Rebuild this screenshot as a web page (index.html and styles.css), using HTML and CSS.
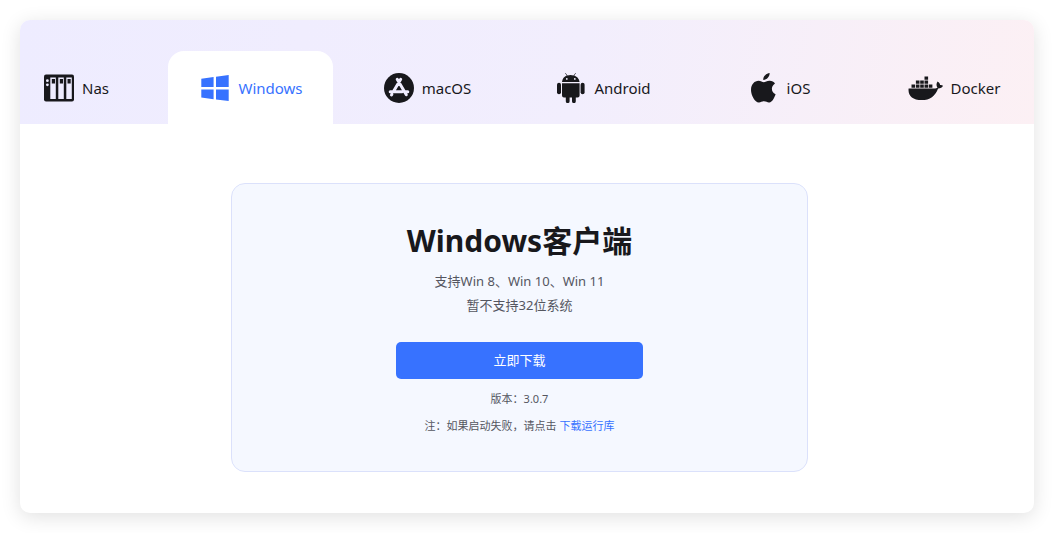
FILE: index.html
```html
<!DOCTYPE html>
<html lang="zh-CN">
<head>
<meta charset="utf-8">
<meta name="viewport" content="width=device-width, initial-scale=1">
<title>Windows客户端</title>
<link rel="stylesheet" href="styles.css">
</head>
<body>
<main class="panel">
  <nav class="tabs" role="tablist" aria-label="客户端">
    <button class="tab tab-first" type="button" role="tab">
      <svg class="icon" viewBox="0 0 30 30" aria-hidden="true">
        <rect x="0" y="1.5" width="30" height="27" rx="2" fill="#18181c"/>
        <g fill="#eeecff"><circle cx="3.4" cy="7.7" r="1.4"/><circle cx="3.4" cy="11.8" r="1.4"/>
        <path d="M6.3 4.5h5.5v21.5H6.3zM14.3 4.5h5.5v21.5h-5.5zM22.3 4.5h5.5v21.5h-5.5z"/></g>
        <path d="M7.8 6h3.2v4.6H7.8zM15.8 6H19v4.600h-3.200zM23.500 6h3.200v4.600h-3.200z" fill="#18181c"/>
      </svg>
      <span>Nas</span>
    </button>
    <button class="tab tab-active" type="button" role="tab" aria-selected="true">
      <svg class="icon" viewBox="0 0 30 30" aria-hidden="true">
        <path fill="currentColor" d="M1.300 5.700 13.600 4v10H1.300zM16 3.700 28.700 2v12H16zM1.300 16.400h12.300v9.900L1.300 24.600zM16 16.400h12.700V28L16 26.400z"/>
      </svg>
      <span>Windows</span>
    </button>
    <button class="tab" type="button" role="tab">
      <svg class="icon" viewBox="0 0 30 30" aria-hidden="true">
        <circle cx="15" cy="15" r="15" fill="#18181c"/>
        <path d="M13.200 6.200 22.300 21.800M16.700 6.200 9.600 18.300M6.200 18.800H18M21.300 18.800h2.500M7.900 21.300l-.4.700" fill="none" stroke="#f0edff" stroke-width="3" stroke-linecap="round"/>
      </svg>
      <span>macOS</span>
    </button>
    <button class="tab" type="button" role="tab">
      <svg class="icon" viewBox="0 0 30 30" aria-hidden="true">
        <g fill="#18181c"><path d="M6 9C6.300 5.700 8.300 3.600 10.800 2.600L9 .3l.5-.3 2 2.400a11 11 0 0 1 6 0L19.500 0l.5.3-1.800 2.300C20.700 3.600 23.300 5.700 23.600 9z"/>
        <path d="M6 10.200h17.600v12.300a2 2 0 0 1-2 2h-1.800v3.700a1.900 1.900 0 0 1-3.800 0v-3.700h-2.400v3.700a1.900 1.900 0 0 1-3.800 0v-3.700H8a2 2 0 0 1-2-2z"/>
        <rect x="1" y="9.800" width="4" height="11.500" rx="2"/><rect x="24.600" y="9.800" width="4" height="11.500" rx="2"/></g>
        <circle cx="10.800" cy="5.900" r=".9" fill="#f2eefd"/><circle cx="18.800" cy="5.900" r=".9" fill="#f2eefd"/>
      </svg>
      <span>Android</span>
    </button>
    <button class="tab" type="button" role="tab">
      <svg class="icon" viewBox="0 0 30 30" aria-hidden="true">
        <path fill="#18181c" d="M20.600 0c.3 3-2.600 7-6.300 6.900C13.900 3.600 17.200.4 20.600 0zM26 10.400c-4.500 2.900-4 8.800.6 10.800-1.100 3.200-3.400 8-6.300 8.300-2 .2-3-1.200-5.300-1.200s-3.300 1.300-5.200 1.200C6 29.300 2 22.500 2 17c0-6 3.800-9.100 7.500-9.200 2.200 0 4 1.500 5.300 1.500s3.500-1.700 6-1.500c2.200.1 4 1 5.200 2.600z"/>
      </svg>
      <span>iOS</span>
    </button>
    <button class="tab" type="button" role="tab">
      <svg class="icon icon-wide" viewBox="0 0 35 30" aria-hidden="true">
        <path fill="#18181c" d="M.6 15.400h25.600c1.500 0 2.600-.4 3.300-1-1.400-1.700-1.300-4 .1-5.800 1.500.9 2.400 2.200 2.500 3.500 1-.2 2.100 0 2.900.6-.8 1.700-2.400 2.700-4.900 2.700C27.200 23.200 22 27 13.700 27 4.500 27-.2 22.500.6 15.400z"/>
        <path fill="#18181c" d="M3.500 11.400h3.600v3.300H3.500zM7.900 11.400h3.600v3.300H7.900zM12.200 11.400h3.600v3.300h-3.600zM16.500 11.400h3.600v3.300h-3.600zM20.800 11.400h3.600v3.300h-3.600zM7.900 7.400h3.600v3.300H7.900zM12.200 7.400h3.600v3.300h-3.600zM16.500 7.400h3.600v3.300h-3.600zM16.500 3.400h3.600v3.300h-3.600z"/>
      </svg>
      <span>Docker</span>
    </button>
  </nav>
  <section class="content">
    <div class="card">
      <h1 class="title">Windows客户端</h1>
      <p class="support">支持Win 8、Win 10、Win 11<br>暂不支持32位系统</p>
      <button class="download" type="button">立即下载</button>
      <p class="note">版本：3.0.7</p>
      <p class="note">注：如果启动失败，请点击 <a class="link" href="#">下载运行库</a></p>
    </div>
  </section>
</main>
</body>
</html>
```
FILE: styles.css
```css
* {
  box-sizing: border-box;
}

body {
  margin: 0;
  padding: 20px;
  background: #fff;
  color: #18181c;
  font-family: "Noto Sans", "Noto Sans CJK SC", sans-serif;
}

.panel {
  overflow: hidden;
  border-radius: 10px;
  box-shadow: 0 4px 20px rgba(0, 0, 0, 0.12);
  background: #fff;
}

.tabs {
  display: grid;
  grid-template-columns: 137fr repeat(4, 165fr) 162fr;
  column-gap: 11px;
  padding-top: 31px;
  background: linear-gradient(100deg, #eeecff 0%, #f2eefd 55%, #fcf0f4 100%);
}

.tab {
  display: flex;
  align-items: center;
  justify-content: center;
  gap: 8px;
  height: 73px;
  padding: 0 0 0 2px;
  border: 0;
  border-radius: 16px 16px 0 0;
  background: none;
  color: #18181c;
  font: inherit;
  font-size: 15px;
  cursor: pointer;
}

.tab-first {
  justify-content: flex-start;
  padding-left: 24px;
}

.tab-active {
  background: #fff;
  color: #3772ff;
}

.icon {
  flex: none;
  width: 30px;
  height: 30px;
}

.icon-wide {
  width: 35px;
}

.content {
  padding: 59px 226px 41px 211px;
}

.card {
  display: flex;
  flex-direction: column;
  align-items: center;
  padding: 36px 20px 32px;
  border: 1px solid #dbe1fb;
  border-radius: 14px;
  background: #f5f8ff;
  text-align: center;
}

.title {
  margin: 0 0 7px;
  font-size: 30px;
  line-height: 42px;
  font-weight: 700;
}

.support {
  margin: 0 0 25px;
  color: #54565f;
  font-size: 13px;
  line-height: 24px;
}

.download {
  width: 247px;
  height: 37px;
  margin-bottom: 6px;
  padding: 0 0 2px;
  border: 0;
  border-radius: 5px;
  background: #3772ff;
  color: #fff;
  font: inherit;
  font-size: 13px;
  cursor: pointer;
}

.note {
  margin: 0;
  color: #54565f;
  font-size: 11px;
  line-height: 27px;
}

.link {
  color: #3772ff;
  text-decoration: none;
}
```
